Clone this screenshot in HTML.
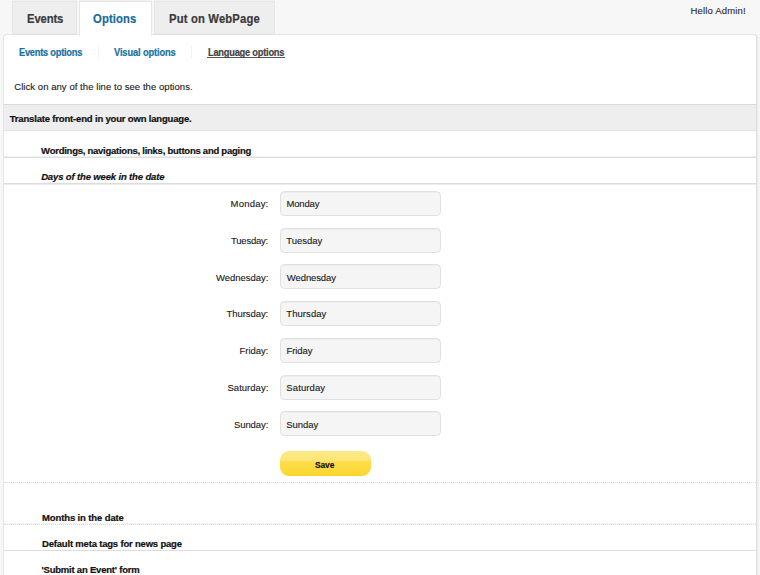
<!DOCTYPE html>
<html><head><meta charset="utf-8">
<style>
*{margin:0;padding:0;box-sizing:border-box}
html,body{width:760px;height:575px;overflow:hidden;background:#f7f7f7;font-family:"Liberation Sans",sans-serif;color:#222}
.a{position:absolute;white-space:nowrap;line-height:12px}
.tab{position:absolute;top:1px;height:33px;background:#eeeeee;border:1px solid #e6e6e6;box-shadow:0 -1px 0 #f0f0f0}
.tt{font-weight:bold;font-size:12.5px;color:#3a3a3a}
.tt.on{color:#176c9b}
.hel{font-size:9.5px;color:#2a2a2a}
.panel{position:absolute;left:3px;top:34px;width:754px;height:600px;background:#fff;border:1px solid #e4e4e4;border-right:1px solid #dfdfdf;border-radius:4px;box-shadow:1px 0 0 #ececec,2px 0 0 #f2f2f2}
.sn{font-weight:bold;font-size:10px;color:#1872a2}
.sn.cur{color:#444}
.ul{position:absolute;left:207px;top:57px;width:78px;height:1px;background:#555}
.sep{position:absolute;top:46px;width:1px;height:12px;background:#f4f2ee}
.reg{font-size:9.5px;color:#1a1a1a}
.click{font-size:9.5px;color:#1a1a1a}
.rowt{font-weight:bold;font-size:9.5px;color:#111}
.it{font-style:italic}
.rowt,.sn,.tt{-webkit-text-stroke:0.2px currentColor}
.reg,.click,.hel{-webkit-text-stroke:0.12px currentColor}
.hl{position:absolute;left:4px;width:752px;height:1px;background:#dedede}
.hd{position:absolute;left:4px;width:752px;height:1px;border-top:1px dotted #d9d9d9}
.inp{position:absolute;left:280px;width:161px;height:25px;background:#f5f5f5;border:1px solid #e0e0e0;border-radius:4.5px;box-shadow:inset 0 1px 0 #ededed}
.bar{position:absolute;left:4px;top:104px;width:752px;height:27px;background:#eeeeee;border-top:1px solid #d9d9d9;border-bottom:1px solid #e2e2e2}
.btn{position:absolute;left:280px;top:451px;width:91px;height:25px;border-radius:9px;background:linear-gradient(#fde985 0%,#fde67a 35%,#fddd4c 45%,#fcd936 85%,#fbd42a 100%)}
.tt{transform:scaleX(0.9);transform-origin:0 0}
.sn{transform:scaleX(0.93);transform-origin:0 0}
#save{transform:scaleX(0.88);transform-origin:0 0}

</style></head><body>
<div class="tab" style="left:12px;width:65px"></div>
<div class="tab" style="left:154px;width:121px"></div>
<div class="panel"></div>
<div class="tab" style="left:79px;width:73px;height:35px;background:#fff;border-bottom:none"></div>
<div class="sep" style="left:98px"></div>
<div class="sep" style="left:191px"></div>
<div class="ul"></div>
<div class="bar"></div>
<div class="hl" style="top:156px;background:#f1f1f1"></div><div class="hl" style="top:157px"></div>
<div class="hl" style="top:183px;background:#dcdcdc"></div><div class="hl" style="top:184px;background:#ededed"></div>
<div class="inp" style="top:191px"></div>
<div class="inp" style="top:228px"></div>
<div class="inp" style="top:264px"></div>
<div class="inp" style="top:301px"></div>
<div class="inp" style="top:338px"></div>
<div class="inp" style="top:375px"></div>
<div class="inp" style="top:411px"></div>
<div class="btn"></div>
<div class="hd" style="top:482px"></div>
<div class="hl" style="top:523px;background:#f3f3f3"></div><div class="hd" style="top:524px"></div>
<div class="hl" style="top:550px"></div>

<div id="t1" class="a tt" style="left:26.75px;top:13.00px;letter-spacing:-0.123px">Events</div>
<div id="t2" class="a tt on" style="left:93.39px;top:13.00px;letter-spacing:0.151px">Options</div>
<div id="t3" class="a tt" style="left:169.00px;top:12.70px;letter-spacing:0.190px">Put on WebPage</div>
<div id="hello" class="a hel" style="left:690.54px;top:5.10px;letter-spacing:0.152px">Hello Admin!</div>
<div id="s1" class="a sn" style="left:19.40px;top:46.50px;letter-spacing:-0.270px">Events options</div>
<div id="s2" class="a sn" style="left:114.25px;top:46.50px;letter-spacing:-0.139px">Visual options</div>
<div id="s3" class="a sn cur" style="left:208.06px;top:46.50px;letter-spacing:-0.261px">Language options</div>
<div id="click" class="a click" style="left:14.22px;top:80.50px;letter-spacing:0.060px">Click on any of the line to see the options.</div>
<div id="bar" class="a rowt" style="left:9.74px;top:112.60px;letter-spacing:-0.174px">Translate front-end in your own language.</div>
<div id="r1" class="a rowt" style="left:41.12px;top:144.60px;letter-spacing:-0.253px">Wordings, navigations, links, buttons and paging</div>
<div id="r2" class="a rowt it" style="left:41.17px;top:171.00px;letter-spacing:-0.143px">Days of the week in the date</div>
<div id="save" class="a rowt" style="left:315.01px;top:458.80px;letter-spacing:-0.069px">Save</div>
<div id="r3" class="a rowt" style="left:42.02px;top:511.60px;letter-spacing:-0.120px">Months in the date</div>
<div id="r4" class="a rowt" style="left:42.02px;top:537.70px;letter-spacing:-0.191px">Default meta tags for news page</div>
<div id="r5" class="a rowt" style="left:41.51px;top:563.70px;letter-spacing:-0.215px">'Submit an Event' form</div>
<div id="l0" class="a reg" style="left:230.62px;top:198.20px;letter-spacing:0.203px">Monday:</div>
<div id="i0" class="a reg" style="left:286.47px;top:198.20px;letter-spacing:-0.175px">Monday</div>
<div id="l1" class="a reg" style="left:231.09px;top:234.93px;letter-spacing:-0.227px">Tuesday:</div>
<div id="i1" class="a reg" style="left:286.34px;top:234.93px;letter-spacing:-0.041px">Tuesday</div>
<div id="l2" class="a reg" style="left:215.90px;top:271.66px;letter-spacing:-0.028px">Wednesday:</div>
<div id="i2" class="a reg" style="left:286.86px;top:271.66px;letter-spacing:-0.114px">Wednesday</div>
<div id="l3" class="a reg" style="left:226.58px;top:308.39px;letter-spacing:-0.079px">Thursday:</div>
<div id="i3" class="a reg" style="left:286.34px;top:308.39px;letter-spacing:0.057px">Thursday</div>
<div id="l4" class="a reg" style="left:239.56px;top:345.12px;letter-spacing:-0.053px">Friday:</div>
<div id="i4" class="a reg" style="left:286.49px;top:345.12px;letter-spacing:-0.064px">Friday</div>
<div id="l5" class="a reg" style="left:227.50px;top:381.85px;letter-spacing:0.019px">Saturday:</div>
<div id="i5" class="a reg" style="left:286.34px;top:381.85px;letter-spacing:0.107px">Saturday</div>
<div id="l6" class="a reg" style="left:233.98px;top:418.58px;letter-spacing:-0.087px">Sunday:</div>
<div id="i6" class="a reg" style="left:286.34px;top:418.58px;letter-spacing:-0.056px">Sunday</div>
</body></html>
